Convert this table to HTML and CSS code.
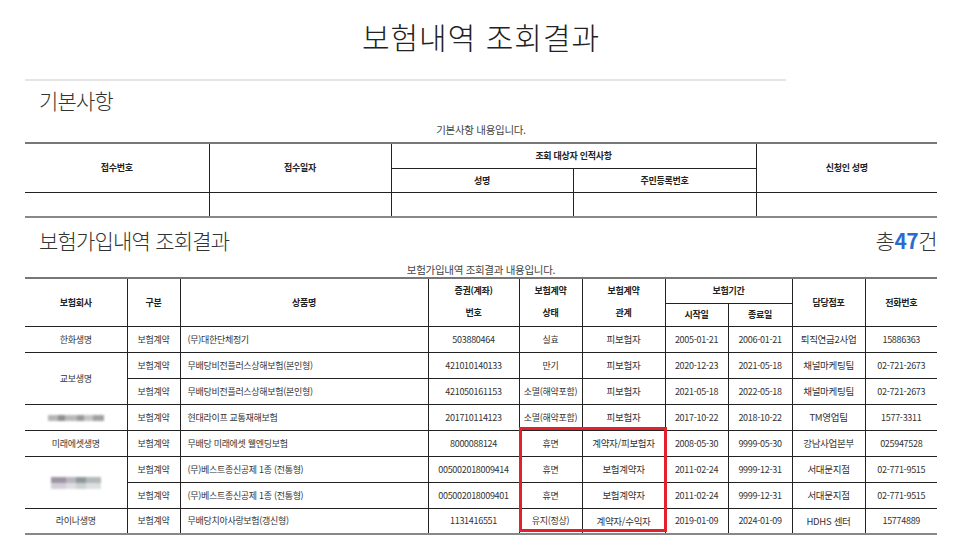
FILE: index.html
```html
<!DOCTYPE html>
<html lang="ko">
<head>
<meta charset="utf-8">
<title>보험내역 조회결과</title>
<link rel="stylesheet" href="styles.css">
</head>
<body>
<div class="page">
  <h1 class="title">보험내역 조회결과</h1>
  <div class="rule"></div>

  <div class="section-head first">
    <h2>기본사항</h2>
  </div>
  <p class="caption cap1">기본사항 내용입니다.</p>
  <table class="grid basic">
    <colgroup>
      <col style="width:184px"><col style="width:182px"><col style="width:182px"><col style="width:183px"><col style="width:181px">
    </colgroup>
    <tr class="h1">
      <th rowspan="2">접수번호</th>
      <th rowspan="2">접수일자</th>
      <th colspan="2">조회 대상자 인적사항</th>
      <th rowspan="2">신청인 성명</th>
    </tr>
    <tr class="h2">
      <th>성명</th>
      <th>주민등록번호</th>
    </tr>
    <tr class="d">
      <td></td><td></td><td></td><td></td><td></td>
    </tr>
  </table>

  <div class="section-head second">
    <h2>보험가입내역 조회결과</h2>
    <div class="total">총<b>47</b>건</div>
  </div>
  <p class="caption cap2">보험가입내역 조회결과 내용입니다.</p>

  <div class="table-wrap">
    <table class="grid list">
      <colgroup>
        <col style="width:102px"><col style="width:53px"><col style="width:248px"><col style="width:91px"><col style="width:63px"><col style="width:83px"><col style="width:63px"><col style="width:64px"><col style="width:73px"><col style="width:72px">
      </colgroup>
      <tr class="h1">
        <th rowspan="2">보험회사</th>
        <th rowspan="2">구분</th>
        <th rowspan="2">상품명</th>
        <th rowspan="2" class="two">증권(계좌)<br>번호</th>
        <th rowspan="2" class="two">보험계약<br>상태</th>
        <th rowspan="2" class="two">보험계약<br>관계</th>
        <th colspan="2">보험기간</th>
        <th rowspan="2">담당점포</th>
        <th rowspan="2">전화번호</th>
      </tr>
      <tr class="h2">
        <th>시작일</th>
        <th>종료일</th>
      </tr>
      <tr>
        <td>한화생명</td><td>보험계약</td><td class="name">(무)대한단체정기</td><td>503880464</td><td>실효</td><td class="rel">피보험자</td><td>2005-01-21</td><td>2006-01-21</td><td class="rel">퇴직연금2사업</td><td>15886363</td>
      </tr>
      <tr>
        <td rowspan="2">교보생명</td><td>보험계약</td><td class="name">무배당비전플러스상해보험(본인형)</td><td>421010140133</td><td>만기</td><td class="rel">피보험자</td><td>2020-12-23</td><td>2021-05-18</td><td class="rel">채널마케팅팀</td><td>02-721-2673</td>
      </tr>
      <tr>
        <td>보험계약</td><td class="name">무배당비전플러스상해보험(본인형)</td><td>421050161153</td><td>소멸(해약포함)</td><td class="rel">피보험자</td><td>2021-05-18</td><td>2022-05-18</td><td class="rel">채널마케팅팀</td><td>02-721-2673</td>
      </tr>
      <tr>
        <td><span class="blur blur-a"></span></td><td>보험계약</td><td class="name">현대라이프 교통재해보험</td><td>201710114123</td><td>소멸(해약포함)</td><td class="rel">피보험자</td><td>2017-10-22</td><td>2018-10-22</td><td class="rel">TM영업팀</td><td>1577-3311</td>
      </tr>
      <tr>
        <td>미래에셋생명</td><td>보험계약</td><td class="name">무배당 미래에셋 웰엔딩보험</td><td>8000088124</td><td>휴면</td><td class="rel">계약자/피보험자</td><td>2008-05-30</td><td>9999-05-30</td><td class="rel">강남사업본부</td><td>025947528</td>
      </tr>
      <tr>
        <td rowspan="2"><span class="blur blur-b"></span></td><td>보험계약</td><td class="name">(무)베스트종신공제 1종 (전통형)</td><td>005002018009414</td><td>휴면</td><td class="rel">보험계약자</td><td>2011-02-24</td><td>9999-12-31</td><td class="rel">서대문지점</td><td>02-771-9515</td>
      </tr>
      <tr>
        <td>보험계약</td><td class="name">(무)베스트종신공제 1종 (전통형)</td><td>005002018009401</td><td>휴면</td><td class="rel">보험계약자</td><td>2011-02-24</td><td>9999-12-31</td><td class="rel">서대문지점</td><td>02-771-9515</td>
      </tr>
      <tr>
        <td>라이나생명</td><td>보험계약</td><td class="name">무배당치아사랑보험(갱신형)</td><td>1131416551</td><td>유지(정상)</td><td class="rel">계약자/수익자</td><td>2019-01-09</td><td>2024-01-09</td><td class="rel">HDHS 센터</td><td>15774889</td>
      </tr>
    </table>
    <div class="highlight"></div>
  </div>
</div>
</body>
</html>
```

FILE: styles.css
```css
* { box-sizing: border-box; }

body {
  margin: 0;
  background: #fff;
  color: #333;
  font-family: "Noto Sans CJK KR", "Noto Sans", sans-serif;
}

.page {
  width: 937px;
  padding: 16px 0 0 25px;
}

.title {
  margin: 0;
  text-align: center;
  font-size: 30px;
  font-weight: 300;
  line-height: 40px;
  letter-spacing: 1px;
  color: #222;
}

.rule {
  width: 761px;
  height: 2px;
  margin-top: 23px;
  background: #e6e6e6;
}

.section-head {
  display: flex;
  justify-content: space-between;
  align-items: baseline;
  padding-left: 14px;
  height: 26px;
}

.section-head.first {
  margin-top: 6px;
}

.section-head.second {
  margin-top: 9px;
}

.section-head h2 {
  margin: 0;
  font-size: 21px;
  font-weight: 300;
  line-height: 26px;
  letter-spacing: -0.8px;
  color: #333;
}

.total {
  font-size: 21px;
  font-weight: 300;
  line-height: 26px;
  letter-spacing: -0.5px;
  color: #333;
}

.total b {
  color: #2a6bd1;
  font-weight: 700;
}

.caption {
  margin: 0;
  text-align: center;
  font-size: 10.5px;
  line-height: 14px;
  color: #444;
  letter-spacing: -0.3px;
}

.caption.cap1 {
  margin-top: 10px;
}

.caption.cap2 {
  margin-top: 10px;
}

.grid {
  width: 912px;
  table-layout: fixed;
  border-collapse: collapse;
  border-top: 2px solid #777;
  border-bottom: 2px solid #888;
  border-left: hidden;
  border-right: hidden;
  font-size: 9px;
  letter-spacing: -0.3px;
  text-align: center;
}

.grid th,
.grid td {
  border: 1px solid #222;
  padding: 0;
  vertical-align: middle;
  white-space: nowrap;
}

.grid th {
  font-weight: 700;
  color: #222;
}

.grid td {
  color: #333;
}

.basic {
  margin-top: 5px;
}

.basic .h1 { height: 25px; }
.basic .h2 { height: 24px; }
.basic .d { height: 25px; }

.table-wrap {
  position: relative;
  margin-top: 0;
  width: 912px;
}

.list .h1 { height: 25px; }
.list .h2 { height: 23px; }
.list tr { height: 26px; }

.list th.two {
  line-height: 22px;
}

.list td.name {
  text-align: left;
  padding-left: 7px;
}

.list td.rel {
  font-size: 9.5px;
}

.blur {
  display: inline-block;
  vertical-align: middle;
  filter: blur(1.2px);
}

.blur-a {
  width: 56px;
  height: 6px;
  background: linear-gradient(90deg, #b5b5b5 0 18%, #8f8f8f 18% 30%, #b9b9b9 30% 52%, #999 52% 64%, #c4c4c4 64% 80%, #a0a0a0 80% 100%);
}

.blur-b {
  width: 50px;
  height: 12px;
  background:
    linear-gradient(180deg, transparent 0 50%, rgba(255,255,255,0.55) 50% 100%),
    linear-gradient(90deg, #9d94a4 0 30%, #b9b4bd 30% 50%, #8e9898 50% 70%, #b4b8ba 70% 100%);
}

.highlight {
  position: absolute;
  left: 494px;
  top: 150px;
  width: 148px;
  height: 105px;
  border: 3px solid #e3212d;
  pointer-events: none;
}
```
